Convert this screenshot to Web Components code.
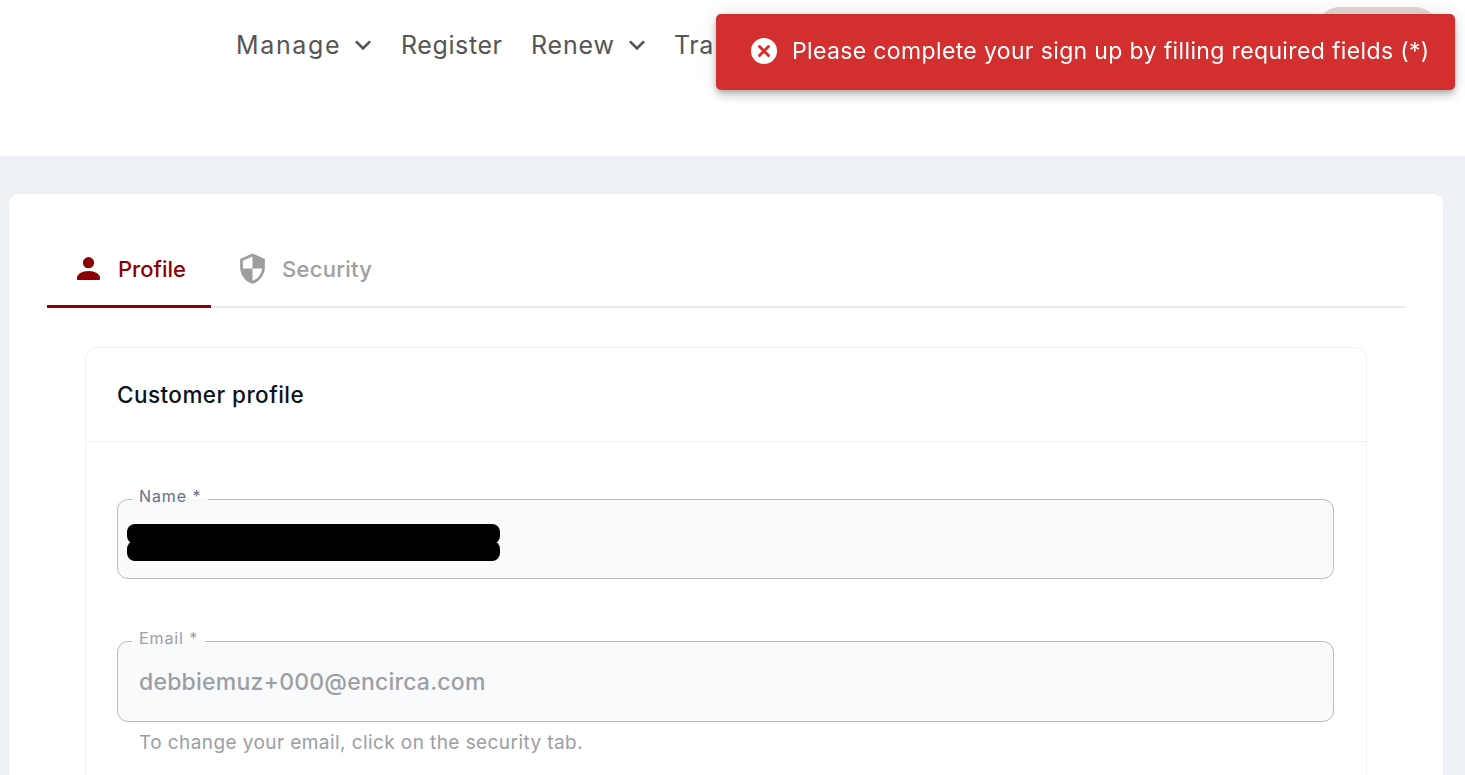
<!DOCTYPE html>
<html lang="en"><head><meta charset="utf-8"><title>Profile</title>
<style>
html,body{margin:0;height:775px;overflow:hidden;background:#eef1f6;font-family:Inter,"Liberation Sans",sans-serif}
</style></head><body>
<app-page>
  <app-header slot="header">
    <nav-item caret style="--w:165px;--ls:1.65px">Manage</nav-item>
    <nav-item style="--w:130px;--ls:.6px">Register</nav-item>
    <nav-item caret style="--w:143px;--ls:.8px">Renew</nav-item>
    <nav-item style="--w:42px;--ls:.6px">Tra</nav-item>
  </app-header>
  <app-panel>
    <app-tabs></app-tabs>
    <profile-card title-text="Customer profile">
      <form-field label="Name *" redacted style="--h:80px"></form-field>
      <form-field label="Email *" value="debbiemuz+000@encirca.com" disabled hint="To change your email, click on the security tab." style="--h:81px"></form-field>
    </profile-card>
  </app-panel>
</app-page>
<app-toast>Please complete your sign up by filling required fields (*)</app-toast>
<script>
const def=(name,html)=>customElements.define(name,class extends HTMLElement{
  constructor(){super();this.attachShadow({mode:'open'}).innerHTML=typeof html==='function'?html(this):html;}
});
def('app-page',`<style>:host{display:block;height:775px;overflow:hidden}</style><slot name="header"></slot><slot></slot>`);
def('app-header',`<style>:host{display:flex;align-items:flex-start;height:156px;box-sizing:border-box;background:#fff;padding:28px 0 0 236px;position:relative}
.pill{position:absolute;left:1315px;top:7px;width:125px;height:50px;border-radius:25px;background:#e6d6d6}</style><slot></slot><div class="pill"></div>`);
def('nav-item',el=>`<style>:host{display:flex;align-items:center;flex:none;width:var(--w);height:34px;font-size:25px;letter-spacing:var(--ls);color:#555;white-space:nowrap}
svg{width:32px;height:32px;flex:none;margin-left:6px}</style><slot></slot>${el.hasAttribute('caret')?'<svg viewBox="0 0 24 24"><path d="M7.41 8.59 12 13.17l4.59-4.58L18 10l-6 6-6-6z" fill="#555"/></svg>':''}`);
def('app-panel',`<style>:host{display:block;margin:38px 22px 0 9px;padding:38px 38px 0;background:#fff;border-radius:10px;height:640px;box-sizing:border-box}</style><slot></slot>`);
def('app-tabs',`<style>:host{display:flex;height:76px;box-sizing:border-box;border-bottom:2px solid #e8eaee}
.t{display:flex;align-items:center;height:76px;box-sizing:border-box;font-size:22px;font-weight:500}
.on{width:164px;padding-left:29px;color:#8b0000;border-bottom:3px solid #8b0000;gap:17px}
.off{padding:0 0 3px 25px;color:#9e9e9e;gap:13px;letter-spacing:.28px}
svg{flex:none;fill:currentColor}</style>
<div class="t on"><svg width="25" height="24" viewBox="0 0 25 24"><circle cx="12.5" cy="5.7" r="5.6"/><path d="M1 21c0-4 5-7 11.5-7S24 17 24 21v1a1 1 0 0 1-1 1H2a1 1 0 0 1-1-1z"/></svg>Profile</div>
<div class="t off"><svg width="33" height="33" viewBox="0 0 24 24"><path d="M12 1 3 5v6c0 5.55 3.84 10.74 9 12 5.16-1.26 9-6.45 9-12V5l-9-4zm0 10.99h7c-.53 4.12-3.28 7.79-7 8.94V12H5V6.3l7-3.11v8.8z"/></svg>Security</div>`);
def('profile-card',el=>`<style>:host{display:block;margin:39px 38px 0;border:1px solid #eef0f3;border-radius:12px;height:500px;box-sizing:border-box}
h2{margin:0;height:94px;box-sizing:border-box;padding:0 31px;display:flex;align-items:center;font-size:22.5px;font-weight:500;letter-spacing:.44px;color:#0b1220;border-bottom:1px solid #eef0f3}
.b{padding:57px 32px 0 31px;display:flex;flex-direction:column;gap:62px}</style>
<h2>${el.getAttribute('title-text')}</h2><div class="b"><slot></slot></div>`);
def('form-field',el=>{
  const d=el.hasAttribute('disabled');const hint=el.getAttribute('hint');
  return `<style>:host{display:block;position:relative}
.box{height:var(--h);box-sizing:border-box;background:#f9fafc;border:1px solid #b9bcc0;border-radius:11px;display:flex;align-items:center;padding:0 21px;font-size:23px;font-weight:500;letter-spacing:.22px;color:#9ca0a6}
.lab{position:absolute;left:15px;top:-13px;padding:0 7px;background:linear-gradient(#fff 62%,#f9fafc 62%);font-size:16px;line-height:20px;letter-spacing:.9px;color:${d?'#9a9ea5':'#667085'}}
.hint{margin:10px 0 -32px 22px;height:22px;line-height:22px;font-size:19px;letter-spacing:.42px;color:#9a9ea5}
.red{position:absolute;left:10px;top:25px;width:373px;height:37px}
.red i{position:absolute;left:0;right:0;height:20px;background:#000;border-radius:8px}
.red i:first-child{top:0}.red i:last-child{top:17px}</style>
<div class="box">${el.getAttribute('value')||''}${el.hasAttribute('redacted')?'<div class="red"><i></i><i></i></div>':''}</div>
<div class="lab">${el.getAttribute('label')}</div>${hint?`<div class="hint">${hint}</div>`:''}`;
});
def('app-toast',`<style>:host{position:fixed;top:14px;right:10px;width:739px;height:76px;box-sizing:border-box;display:flex;align-items:center;gap:14px;padding:0 0 2px 34px;background:#d32f2f;border-radius:5px;color:#fff;font-size:23px;letter-spacing:.36px;white-space:nowrap;box-shadow:0 3px 5px -1px rgba(0,0,0,.2),0 6px 10px rgba(0,0,0,.14),0 1px 18px rgba(0,0,0,.12)}
svg{width:28px;height:28px;flex:none}</style>
<svg viewBox="0 0 28 28"><circle cx="14" cy="14" r="13" fill="#fff"/><path d="M9.5 9.5l9 9M18.5 9.5l-9 9" stroke="#d32f2f" stroke-width="3" stroke-linecap="round"/></svg><slot></slot>`);
</script>
</body></html>
